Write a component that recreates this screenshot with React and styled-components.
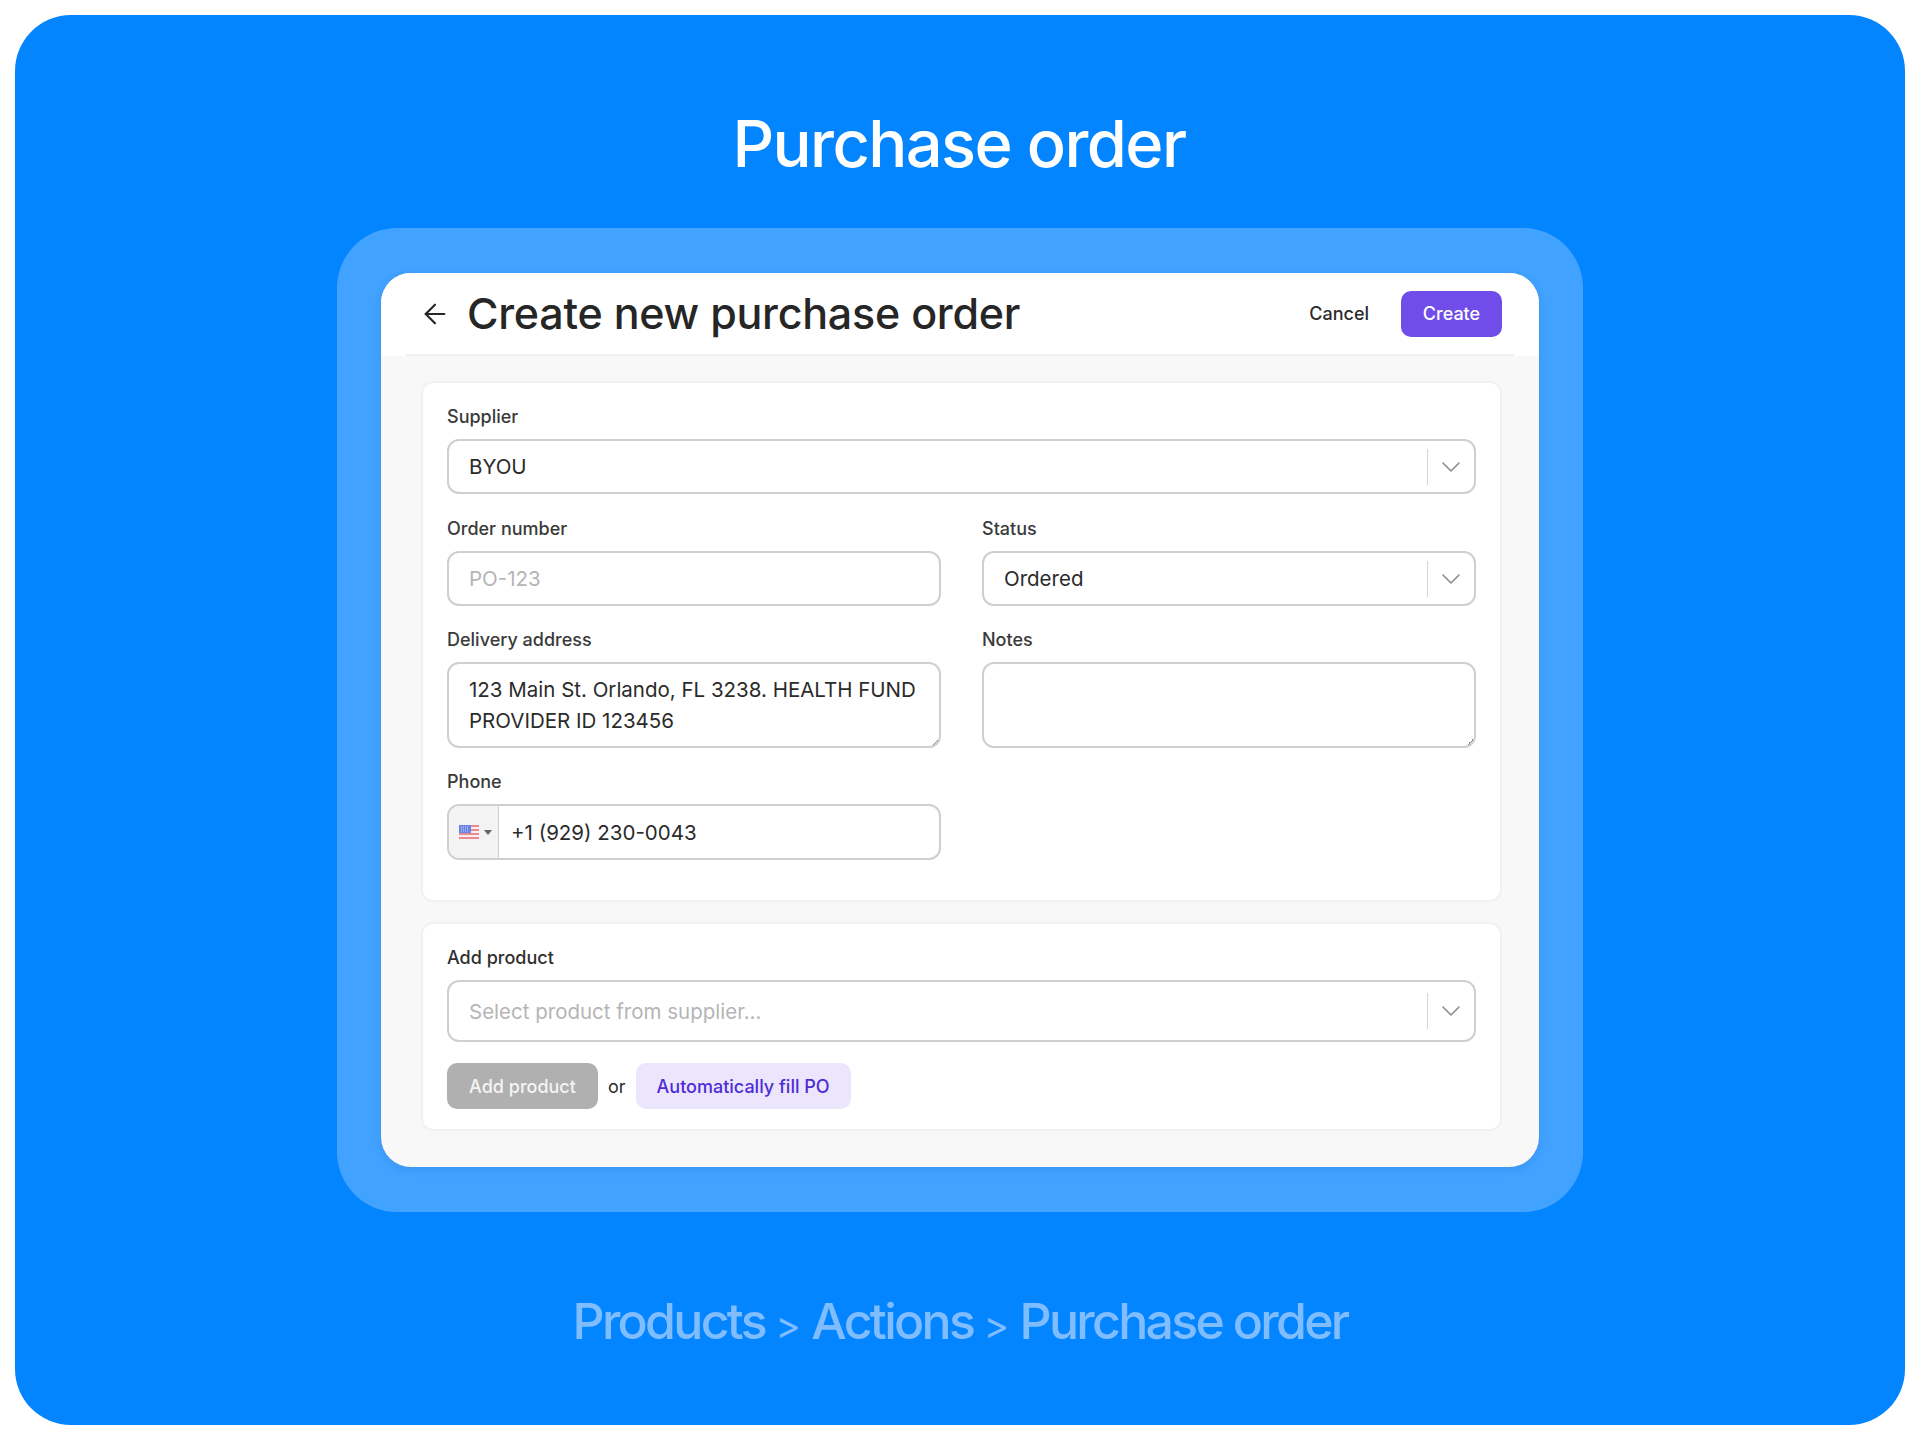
import React from 'react';
import styled, { createGlobalStyle } from 'styled-components';
import { ArrowLeft, ChevronDown } from 'lucide-react';

const GlobalStyle = createGlobalStyle`
  html, body {
    margin: 0;
    padding: 0;
    background: #fff;
  }
  * {
    box-sizing: border-box;
  }
`;

const UsFlag = () => (
  <svg width="20" height="14" viewBox="0 0 20 14">
    <rect width="20" height="14" fill="#f6eeee" />
    <rect y="0" width="20" height="2" fill="#e98a90" />
    <rect y="4" width="20" height="2" fill="#e98a90" />
    <rect y="8" width="20" height="2" fill="#e98a90" />
    <rect y="12" width="20" height="2" fill="#e98a90" />
    <rect width="12" height="8" fill="#6a84e6" />
    <path d="M2 2h8M2 4h8M2 6h8" stroke="#c3cdf5" strokeWidth="1" strokeDasharray="1 1" />
  </svg>
);

const SelectField = ({ value, placeholder, tall }) => (
  <SelectBox $tall={tall}>
    <SelectValue $placeholder={!value}>{value || placeholder}</SelectValue>
    <Divider />
    <Caret>
      <ChevronDown size={32} strokeWidth={1.15} />
    </Caret>
  </SelectBox>
);

const App = () => {
  return (
    <>
      <GlobalStyle />
      <Frame>
        <Title>Purchase order</Title>
        <Panel>
          <Card>
            <Header>
              <BackButton>
                <ArrowLeft size={32} strokeWidth={1.6} />
              </BackButton>
              <Heading>Create new purchase order</Heading>
              <CancelButton>Cancel</CancelButton>
              <CreateButton>Create</CreateButton>
            </Header>
            <Body>
              <Section>
                <Field>
                  <Label>Supplier</Label>
                  <SelectField value="BYOU" />
                </Field>
                <TwoCols>
                  <Field>
                    <Label>Order number</Label>
                    <InputBox>
                      <Placeholder>PO-123</Placeholder>
                    </InputBox>
                  </Field>
                  <Field>
                    <Label>Status</Label>
                    <SelectField value="Ordered" />
                  </Field>
                  <Field>
                    <Label>Delivery address</Label>
                    <TextArea>
                      123 Main St. Orlando, FL 3238. HEALTH FUND PROVIDER ID 123456
                      <Grip />
                    </TextArea>
                  </Field>
                  <Field>
                    <Label>Notes</Label>
                    <TextArea>
                      <Grip />
                    </TextArea>
                  </Field>
                  <Field>
                    <Label>Phone</Label>
                    <PhoneBox>
                      <FlagPicker>
                        <UsFlag />
                        <FlagArrow />
                      </FlagPicker>
                      <PhoneValue>+1 (929) 230-0043</PhoneValue>
                    </PhoneBox>
                  </Field>
                </TwoCols>
              </Section>
              <Section $compact>
                <Field>
                  <Label $dark>Add product</Label>
                  <SelectField placeholder="Select product from supplier..." tall />
                </Field>
                <Actions>
                  <AddButton>Add product</AddButton>
                  <OrText>or</OrText>
                  <AutoFillButton>Automatically fill PO</AutoFillButton>
                </Actions>
              </Section>
            </Body>
          </Card>
        </Panel>
        <Crumbs>
          Products <Sep>&gt;</Sep> Actions <Sep>&gt;</Sep> Purchase order
        </Crumbs>
      </Frame>
    </>
  );
};

export default App;

const Frame = styled.div`
  width: 1890px;
  height: 1410px;
  margin: 15px;
  background: #0385ff;
  border-radius: 56px;
  display: flex;
  flex-direction: column;
  align-items: center;
  padding-top: 90px;
  overflow: hidden;
`;
const Title = styled.h1`
  margin: 0 0 0 -2px;
  height: 123px;
  font-family: Inter, sans-serif;
  font-size: 65px;
  line-height: 78px;
  font-weight: 500;
  letter-spacing: -1.6px;
  color: #fff;
`;
const Panel = styled.div`
  width: 1246px;
  height: 984px;
  padding: 45px 44px;
  background: #42a2ff;
  border-radius: 60px;
`;
const Card = styled.div`
  height: 894px;
  background: #f8f8f8;
  border-radius: 30px;
  overflow: hidden;
  box-shadow: 0 3px 8px rgba(0, 60, 140, 0.12);
`;
const Header = styled.div`
  position: relative;
  height: 83px;
  padding: 0 37px 2px 38px;
  display: flex;
  align-items: center;
  background: #fff;
  &::after {
    content: '';
    position: absolute;
    left: 25px;
    right: 25px;
    bottom: 0;
    height: 2px;
    background: #f1f1f1;
  }
`;
const BackButton = styled.span`
  width: 32px;
  height: 32px;
  margin-right: 16px;
  color: #262626;
  display: flex;
`;
const Heading = styled.h2`
  flex: 1;
  margin: 0 0 2px;
  font-family: Inter, sans-serif;
  font-size: 43px;
  line-height: 50px;
  font-weight: 500;
  letter-spacing: -0.25px;
  color: #262626;
`;
const CancelButton = styled.span`
  margin-right: 32px;
  font-family: Inter, sans-serif;
  font-size: 18px;
  font-weight: 500;
  color: #2b2b2b;
`;
const CreateButton = styled.span`
  width: 101px;
  height: 46px;
  display: flex;
  align-items: center;
  justify-content: center;
  background: #704de8;
  border-radius: 10px;
  font-family: Inter, sans-serif;
  font-size: 18px;
  font-weight: 500;
  color: #fff;
`;
const Body = styled.div`
  padding: 25px 37px 0 40px;
  display: flex;
  flex-direction: column;
  gap: 20px;
`;
const Section = styled.div`
  background: #fff;
  border: 2px solid #f1f1f1;
  border-radius: 12px;
  padding: ${(p) => (p.$compact ? '22px 24px 20px' : '22px 24px 40px')};
  display: flex;
  flex-direction: column;
  gap: ${(p) => (p.$compact ? '21px' : '23px')};
`;
const TwoCols = styled.div`
  display: grid;
  grid-template-columns: 1fr 1fr;
  column-gap: 41px;
  row-gap: 22px;
`;
const Field = styled.div`
  display: flex;
  flex-direction: column;
  gap: 10px;
`;
const Label = styled.label`
  font-family: Inter, sans-serif;
  font-size: 18px;
  line-height: 24px;
  font-weight: 500;
  color: ${(p) => (p.$dark ? '#2f2f2f' : '#3a3a3a')};
`;
const SelectBox = styled.div`
  height: ${(p) => (p.$tall ? '62px' : '55px')};
  display: flex;
  align-items: center;
  background: #fff;
  border: 2px solid #cfcfcf;
  border-radius: 12px;
  padding-left: 20px;
`;
const SelectValue = styled.span`
  flex: 1;
  font-family: Inter, sans-serif;
  font-size: 20.5px;
  color: ${(p) => (p.$placeholder ? '#b5b5b5' : '#2b2b2b')};
`;
const Divider = styled.span`
  width: 1px;
  height: 36px;
  background: #d4d4d4;
`;
const Caret = styled.span`
  width: 46px;
  display: flex;
  justify-content: center;
  color: #8a8a8a;
`;
const InputBox = styled.div`
  height: 55px;
  display: flex;
  align-items: center;
  background: #fff;
  border: 2px solid #cfcfcf;
  border-radius: 12px;
  padding-left: 20px;
`;
const Placeholder = styled.span`
  font-family: Inter, sans-serif;
  font-size: 20.5px;
  color: #b5b5b5;
`;
const TextArea = styled.div`
  position: relative;
  height: 86px;
  background: #fff;
  border: 2px solid #cfcfcf;
  border-radius: 12px;
  padding: 10px 14px 10px 20px;
  font-family: Inter, sans-serif;
  font-size: 20.5px;
  line-height: 31px;
  color: #2b2b2b;
`;
const Grip = styled.span`
  position: absolute;
  right: 1px;
  bottom: 1px;
  width: 6px;
  height: 6px;
  background: linear-gradient(135deg, transparent 50%, #8a8a8a 50%, #8a8a8a 65%, transparent 65%);
`;
const PhoneBox = styled.div`
  height: 56px;
  display: flex;
  align-items: stretch;
  background: #fff;
  border: 2px solid #cfcfcf;
  border-radius: 12px;
  overflow: hidden;
`;
const FlagPicker = styled.div`
  width: 50px;
  display: flex;
  align-items: center;
  gap: 5px;
  padding-left: 10px;
  background: #f3f3f3;
  border-right: 1px solid #cfcfcf;
`;
const FlagArrow = styled.span`
  width: 0;
  height: 0;
  border-left: 4px solid transparent;
  border-right: 4px solid transparent;
  border-top: 5px solid #666;
`;
const PhoneValue = styled.span`
  align-self: center;
  padding-left: 12px;
  font-family: Inter, sans-serif;
  font-size: 20.5px;
  color: #2b2b2b;
`;
const Actions = styled.div`
  display: flex;
  align-items: center;
`;
const AddButton = styled.span`
  width: 151px;
  height: 46px;
  display: flex;
  align-items: center;
  justify-content: center;
  background: #b0b0b0;
  border-radius: 10px;
  font-family: Inter, sans-serif;
  font-size: 18px;
  font-weight: 500;
  color: #f5f5f5;
`;
const OrText = styled.span`
  margin: 0 10px;
  font-family: Inter, sans-serif;
  font-size: 18px;
  color: #2b2b2b;
`;
const AutoFillButton = styled.span`
  width: 215px;
  height: 46px;
  display: flex;
  align-items: center;
  justify-content: center;
  background: #ebe6fb;
  border-radius: 10px;
  font-family: Inter, sans-serif;
  font-size: 18px;
  font-weight: 500;
  color: #4f2bd8;
`;
const Crumbs = styled.div`
  margin-top: 79px;
  font-family: Inter, sans-serif;
  font-size: 50px;
  line-height: 60px;
  font-weight: 500;
  letter-spacing: -2.7px;
  color: #80bdff;
`;
const Sep = styled.span`
  font-size: 38px;
  font-weight: 400;
  letter-spacing: 0;
`;
